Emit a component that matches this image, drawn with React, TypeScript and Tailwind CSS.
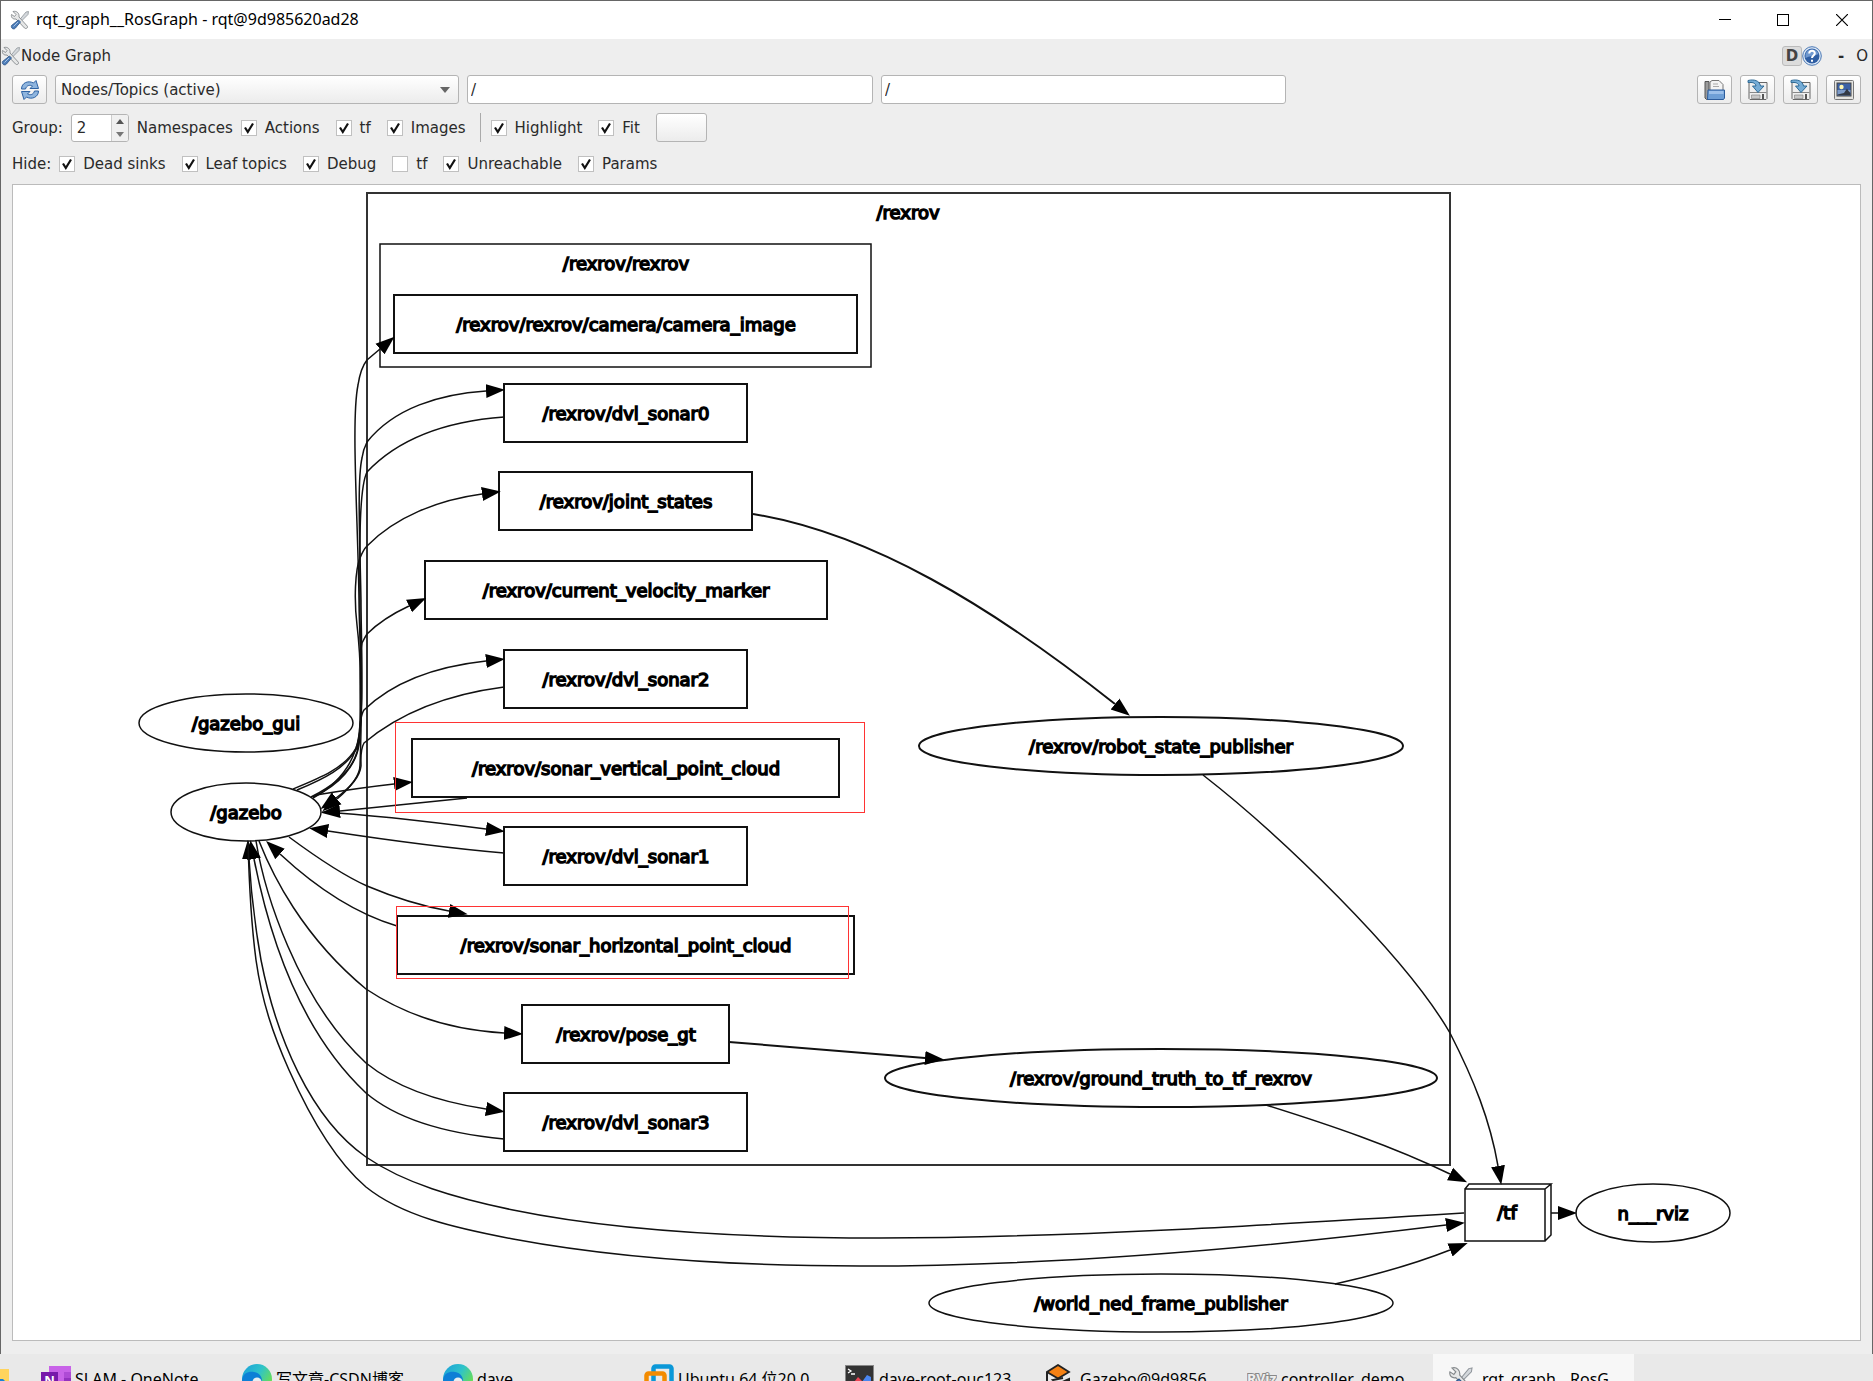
import { useState } from 'react'
import type { ReactNode } from 'react'

type Box = { label: string; x: number; y: number; w: number }
type Ellipse = { label: string; cx: number; cy: number; rx: number; bold?: boolean }
type Edge = { d: string; bold?: boolean }

const TOPICS: Box[] = [
  { label: '/rexrov/rexrov/camera/camera_image', x: 394, y: 295, w: 463 },
  { label: '/rexrov/dvl_sonar0', x: 504, y: 384, w: 243 },
  { label: '/rexrov/joint_states', x: 499, y: 472, w: 253 },
  { label: '/rexrov/current_velocity_marker', x: 425, y: 561, w: 402 },
  { label: '/rexrov/dvl_sonar2', x: 504, y: 650, w: 243 },
  { label: '/rexrov/sonar_vertical_point_cloud', x: 412, y: 739, w: 427 },
  { label: '/rexrov/dvl_sonar1', x: 504, y: 827, w: 243 },
  { label: '/rexrov/sonar_horizontal_point_cloud', x: 397, y: 916, w: 457 },
  { label: '/rexrov/pose_gt', x: 522, y: 1005, w: 207 },
  { label: '/rexrov/dvl_sonar3', x: 504, y: 1093, w: 243 },
]

const NODES: Ellipse[] = [
  { label: '/gazebo_gui', cx: 246, cy: 723, rx: 107 },
  { label: '/gazebo', cx: 246, cy: 812, rx: 75 },
  { label: '/rexrov/robot_state_publisher', cx: 1161, cy: 746, rx: 242, bold: true },
  { label: '/rexrov/ground_truth_to_tf_rexrov', cx: 1161, cy: 1078, rx: 276, bold: true },
  { label: '/world_ned_frame_publisher', cx: 1161, cy: 1303, rx: 232 },
  { label: 'n___rviz', cx: 1653, cy: 1213, rx: 77 },
]

const EDGES: Edge[] = [
  // gazebo -> topics
  { d: 'M293 789 C320 778 345 768 356 748 C366 726 359 640 359 600 C358 520 351 420 358 385 C360 372 363 365 367 360 L380 349' },
  { d: 'M297 790 C324 779 346 768 357 748 C365 720 361 640 361 600 C360 545 357 480 362 458 C363 450 365 446 367 442 C394 408 440 394 486 391' },
  { d: 'M311 797 C335 785 352 770 357 752 C364 720 360 650 357 625 C354 600 355 570 360 558 C362 553 364 549 367 546 C395 517 438 500 482 494' },
  { d: 'M313 797 C340 785 356 765 359 745 C362 720 358 660 362 643 C364 639 365 637 367 634 C380 621 394 613 409 606' },
  { d: 'M313 798 C340 783 355 762 359 735 C360 722 361 714 364 710 C395 680 440 666 486 661' },
  { d: 'M316 795 C340 791 367 787 394 784' },
  { d: 'M322 812 C376 815 432 822 486 829' },
  { d: 'M289 837 C312 854 340 874 367 886 C393 897 421 906 449 911' },
  { d: 'M259 841 C272 874 302 936 366 989 C405 1015 452 1030 504 1033' },
  { d: 'M256 841 C264 890 296 998 366 1063 C398 1089 440 1102 486 1109' },
  // topics -> gazebo
  { d: 'M504 417 C450 421 400 437 367 472 C358 490 360 560 360 620 C362 680 361 740 360 765 C360 776 350 788 337 799' },
  { d: 'M504 687 C450 694 402 711 364 743 C360 750 361 758 361 766 C360 776 350 788 336 798' },
  { d: 'M467 798 C425 802 382 807 340 811' },
  { d: 'M504 853 C446 848 387 840 328 831' },
  { d: 'M397 926 C360 915 322 893 280 854' },
  { d: 'M504 1139 C452 1134 400 1122 366 1093 C300 1031 270 940 254 859' },
  // tf
  { d: 'M1464 1213 C1270 1225 1060 1238 880 1238 C760 1238 620 1232 513 1210 C455 1198 404 1183 366 1157 C310 1118 276 1036 261 960 C255 926 251 892 249 859' },
  { d: 'M248 841 C249 881 251 922 256 960 C262 1002 273 1034 289 1070 C305 1106 332 1158 366 1187 C402 1216 455 1228 513 1239 C620 1259 740 1266 860 1266 C1060 1266 1260 1248 1446 1225' },
  { d: 'M753 514 C870 533 990 605 1115 704', bold: true },
  { d: 'M729 1042 L925 1058', bold: true },
  { d: 'M1203 775 C1280 835 1405 955 1450 1033 C1474 1080 1490 1120 1498 1166' },
  { d: 'M1266 1105 C1330 1125 1392 1146 1450 1174' },
  { d: 'M1335 1284 C1375 1275 1412 1265 1450 1250' },
  { d: 'M1551 1213 L1558 1213' },
]

function Label({ x, y, children }: { x: number; y: number; children: ReactNode }) {
  return (
    <text x={x} y={y} textAnchor="middle" fontSize="18" fill="#000" stroke="#000" strokeWidth="1.5">
      {children}
    </text>
  )
}

function RosGraph() {
  return (
    <svg
      viewBox="13 185 1847 1155"
      className="absolute inset-0 h-full w-full font-['DejaVu_Sans',sans-serif]"
      fill="none"
      stroke="#111"
    >
      <defs>
        <marker id="arrow" viewBox="0 0 19 16" refX="0" refY="8" markerWidth="19" markerHeight="16" markerUnits="userSpaceOnUse" orient="auto">
          <path d="M0 1L19 8L0 15Z" fill="#000" stroke="none" />
        </marker>
      </defs>

      {/* clusters */}
      <rect x="367" y="193" width="1083" height="972" stroke="#333" strokeWidth="2" />
      <Label x={908} y={219}>/rexrov</Label>
      <rect x="380" y="244" width="491" height="123" strokeWidth="1.5" />
      <Label x={626} y={270}>/rexrov/rexrov</Label>

      {TOPICS.map((t) => (
        <g key={t.label}>
          <rect x={t.x} y={t.y} width={t.w} height="58" strokeWidth="2" />
          <Label x={626} y={t.y + 36}>{t.label}</Label>
        </g>
      ))}

      {NODES.map((n) => (
        <g key={n.label}>
          <ellipse cx={n.cx} cy={n.cy} rx={n.rx} ry="29" strokeWidth={n.bold ? 2 : 1.5} />
          <Label x={n.cx} y={n.cy + 7}>{n.label}</Label>
        </g>
      ))}

      {/* tf topic drawn as a 3d box */}
      <path d="M1465 1189H1545V1241H1465ZM1465 1189L1469 1184H1551L1545 1189M1551 1184V1235L1545 1241" strokeWidth="1.5" />
      <Label x={1507} y={1219}>/tf</Label>

      {EDGES.map((e) => (
        <path key={e.d} d={e.d} strokeWidth={e.bold ? 2 : 1.5} markerEnd="url(#arrow)" />
      ))}

      {/* annotations */}
      <g stroke="#ff3333" strokeWidth="1" shapeRendering="crispEdges">
        <rect x="395.5" y="722.5" width="469" height="90" />
        <rect x="396.5" y="906.5" width="452" height="72" />
      </g>
    </svg>
  )
}

function ToolsIcon({ className }: { className: string }) {
  return (
    <svg viewBox="0 0 20 20" className={className}>
      <path d="M18.5 1.5L16 2L9 10.500L10.500 12L18 4.500Z" fill="#d4d8dc" stroke="#8f959b" strokeWidth=".8" />
      <path d="M3 1.500L6 4.500L4.500 6.500L1.500 4.500C.8 7.500 3 9.500 6 9L14.500 18C16 19.500 18.500 17.500 17.200 16L9 7C9.500 3.500 7 .5 3 1.500Z" fill="#e6e7e7" stroke="#85898c" strokeWidth=".9" />
      <path d="M8.500 10L10.500 12L5.500 18C4 20 .5 18.500 1.500 15.500Z" fill="#4d7db8" stroke="#2c5488" strokeWidth=".8" />
      <path d="M8 12L3.500 16.500" stroke="#a6c4e8" strokeWidth="1" />
    </svg>
  )
}

function RefreshIcon() {
  return (
    <svg viewBox="0 0 20 20" className="h-5 w-5">
      <path d="M1.500 9C1.500 3 8 0 13.500 3L16 .5L18.500 8.500H10L12.500 6C9.500 4.500 6.500 5.500 5.500 9Z" fill="#8fb5de" stroke="#2f63a4" strokeLinejoin="round" />
      <path d="M18.500 11C18.500 17 12 20 6.500 17L4 19.500L1.500 11.500H10L7.500 14C10.500 15.500 13.500 14.500 14.500 11Z" fill="#8fb5de" stroke="#2f63a4" strokeLinejoin="round" />
    </svg>
  )
}

function OpenIcon() {
  return (
    <svg viewBox="0 0 22 22" className="h-[22px] w-[22px]">
      <path d="M1 2.500H5V20.500H2.500L1 19Z" fill="#9a9a9a" stroke="#555" />
      <path d="M6 12V3L8 1.500H15L19 5.500V12Z" fill="#f4f4f4" stroke="#777" />
      <path d="M9 5H14M9 7.500H15" stroke="#aaa" />
      <path d="M4 11H20.500V19L19.500 20.500H3.500Z" fill="#6e9fd6" stroke="#2c5c9c" />
      <path d="M5 12H19.500V15H5Z" fill="#9cc0ea" />
    </svg>
  )
}

function SaveIcon() {
  return (
    <svg viewBox="0 0 22 22" className="h-[22px] w-[22px]">
      <path d="M2 3.500H20V19.500L19 20.500H3L2 19.500Z" fill="#efefef" stroke="#666" />
      <path d="M2.500 13.500H19.500" stroke="#888" />
      <path d="M4.500 16H13V19.500H4.500Z" fill="#c8c8c8" stroke="#888" strokeWidth=".7" />
      <path d="M16 15V20" stroke="#222" strokeWidth="1.500" />
      <path d="M1 1.500C7 0 12.500 1.500 13.500 7H17L11 13.500L5.500 7H9C8.500 4 5.500 3 1 3.500Z" fill="#75acd6" stroke="#21618f" strokeWidth=".9" strokeLinejoin="round" />
    </svg>
  )
}

function ImageIcon() {
  return (
    <svg viewBox="0 0 22 22" className="h-[22px] w-[22px]">
      <rect x="1.500" y="1.500" width="19" height="19" rx="1" fill="#e4e4e1" stroke="#777" />
      <rect x="4" y="4" width="14" height="13" fill="#3d62a5" stroke="#444" />
      <path d="M4.500 11H17.500V16.500H4.500Z" fill="#7d9bc8" />
      <circle cx="8.500" cy="8" r="2.200" fill="#fff7b0" />
      <path d="M4.500 16.500V15.500L11 14L14 9.500L15.500 12L17.500 14V16.500Z" fill="#333a45" />
    </svg>
  )
}

function HelpIcon() {
  return (
    <svg viewBox="0 0 20 20" className="h-5 w-5">
      <circle cx="10" cy="10" r="9.300" fill="#dce8f6" stroke="#4a78b5" />
      <circle cx="10" cy="10" r="7.500" fill="#2f5ea3" />
      <path d="M3.500 8A7 7 0 0 1 16.500 8C13 10 7 10 3.500 12Z" fill="#6f98cf" />
      <path d="M7.200 7.500C7.500 3.700 12.900 4.100 12.800 7.400C12.700 9.500 10 9.500 10 12M10 13.800V15.800" fill="none" stroke="#fff" strokeWidth="2" />
    </svg>
  )
}

const BTN = 'flex items-center justify-center rounded-[3px] border border-[#b4b4b4] bg-linear-to-b from-white to-[#ececec]'

function ToolButton({ label, children }: { label: string; children?: ReactNode }) {
  return (
    <button aria-label={label} className={`${BTN} h-[29px] w-[35px] shrink-0`}>
      {children}
    </button>
  )
}

function Check({ label, on = true }: { label: string; on?: boolean }) {
  const [checked, setChecked] = useState(on)
  return (
    <label className="flex items-center gap-2">
      <span className="grid h-4 w-4">
        <input
          type="checkbox"
          checked={checked}
          onChange={() => setChecked(!checked)}
          className="col-start-1 row-start-1 h-4 w-4 appearance-none border border-[#c0c0c0] bg-white"
        />
        {checked && (
          <svg viewBox="0 0 16 16" className="pointer-events-none col-start-1 row-start-1 h-4 w-4">
            <path d="M4 7.500L6.800 12L12 3.500" fill="none" stroke="#111" strokeWidth="2.200" />
          </svg>
        )}
      </span>
      {label}
    </label>
  )
}

function EdgeIcon() {
  return (
    <svg viewBox="0 0 30 30" className="h-[30px] w-[30px]">
      <defs>
        <linearGradient id="edge" x1="0" y1="0" x2="1" y2=".6">
          <stop offset="0" stopColor="#1a9fdc" />
          <stop offset=".55" stopColor="#2fc3c9" />
          <stop offset="1" stopColor="#6ee04c" />
        </linearGradient>
      </defs>
      <circle cx="15" cy="15" r="15" fill="url(#edge)" />
      <path d="M0 16C1 8 8 7 12 8C18 9 20 13 20 17L14 22L15 30C6 30 0 24 0 16Z" fill="#0d7fd6" />
      <circle cx="15" cy="18" r="4.500" fill="#e8eef0" />
    </svg>
  )
}

const TASKS: { name: string; active?: boolean; icon: ReactNode }[] = [
  {
    name: 'SLAM - OneNote',
    icon: (
      <svg viewBox="0 0 30 30" className="h-[30px] w-[30px]">
        <path d="M8 2H30V28H8Z" fill="#c863e8" />
        <path d="M23 8H30V14H23Z" fill="#ae4bd5" />
        <path d="M23 14H30V21H23Z" fill="#9332bf" />
        <path d="M0 8H17V25H0Z" fill="#7719aa" />
        <text x="8.500" y="21" textAnchor="middle" fontSize="13" fontWeight="700" fill="#fff">N</text>
      </svg>
    ),
  },
  { name: '写文章-CSDN博客', icon: <EdgeIcon /> },
  { name: 'dave', icon: <EdgeIcon /> },
  {
    name: 'Ubuntu 64 位20.0',
    icon: (
      <svg viewBox="0 0 30 30" className="h-[30px] w-[30px]" fill="none" strokeWidth="4.500">
        <rect x="9.500" y="2.500" width="18" height="18" rx="2" stroke="#0b98d8" />
        <rect x="2.500" y="9.500" width="18" height="18" rx="2" stroke="#f38b00" />
      </svg>
    ),
  },
  {
    name: 'dave-root-ouc123',
    icon: (
      <svg viewBox="0 0 30 30" className="h-[30px] w-[30px]">
        <rect x=".5" y="1.500" width="28" height="28" fill="#333" stroke="#888" />
        <path d="M3 5L6 7L3 9M6 10H10" fill="none" stroke="#fff" strokeWidth="1.300" />
        <path d="M6 22L13 13L17 17L10 26Z" fill="#ee4455" />
        <path d="M14 22L22 11L26 13V20L18 27Z" fill="#4a86f0" />
      </svg>
    ),
  },
  {
    name: 'Gazebo@9d9856',
    icon: (
      <svg viewBox="0 0 30 30" className="h-[30px] w-[30px]">
        <path d="M12 1L23 8L12 14.500L1 8Z" fill="#f58113" stroke="#222" strokeWidth="1.800" />
        <path d="M1 8V23L12 29L23 23V15L12 20L7 16L17 14" fill="none" stroke="#222" strokeWidth="2" />
      </svg>
    ),
  },
  {
    name: 'controller_demo',
    icon: (
      <svg viewBox="0 0 30 30" className="h-[30px] w-[30px]">
        <text x="0" y="20" fontSize="14" fontWeight="700" fill="#eee" stroke="#888" strokeWidth="2" paintOrder="stroke">RViz</text>
      </svg>
    ),
  },
  { name: 'rqt_graph__RosG', active: true, icon: <ToolsIcon className="h-[26px] w-[26px]" /> },
]

export default function App() {
  const [mode, setMode] = useState('Nodes/Topics (active)')
  const [depth, setDepth] = useState(2)

  return (
    <div className="flex h-screen flex-col overflow-hidden bg-[#e9e9e9] font-['DejaVu_Sans','Noto_Sans_CJK_SC',sans-serif] text-[15px] leading-5 text-[#2a2a2a]">
      <div className="flex min-h-0 flex-1 flex-col border-x border-t border-[#666] bg-[#eeeeee]">
        {/* title bar */}
        <header className="flex h-[38px] shrink-0 items-center bg-white pl-[9px] font-['Noto_Sans',sans-serif] text-black">
          <ToolsIcon className="mr-[6px] h-5 w-5" />
          <h1 className="flex-1 pb-[2px] text-[16px]">rqt_graph__RosGraph - rqt@9d985620ad28</h1>
          <div className="flex h-full">
            <button aria-label="Minimize" className="flex w-[58px] items-center justify-center">
              <svg viewBox="0 0 12 12" className="h-3 w-3"><path d="M0 5.500H12" stroke="#000" /></svg>
            </button>
            <button aria-label="Maximize" className="flex w-[58px] items-center justify-center">
              <svg viewBox="0 0 12 12" className="h-3 w-3"><rect x=".5" y=".5" width="11" height="11" fill="none" stroke="#000" /></svg>
            </button>
            <button aria-label="Close" className="flex w-[60px] items-center justify-center">
              <svg viewBox="0 0 12 12" className="h-3 w-3"><path d="M0 0L12 12M12 0L0 12" stroke="#000" strokeWidth="1.200" /></svg>
            </button>
          </div>
        </header>

        {/* dock title */}
        <div className="flex h-[34px] shrink-0 items-center">
          <ToolsIcon className="h-5 w-5" />
          <h2 className="flex-1">Node Graph</h2>
          <button className="h-5 w-5 rounded-[3px] border border-[#bbb] bg-[#dcdcdc] text-center leading-[18px] font-bold text-[#444]">D</button>
          <button aria-label="Help" className="mr-4"><HelpIcon /></button>
          <button aria-label="Hide dock" className="mr-3 font-bold">-</button>
          <button aria-label="Float dock" className="mr-1">O</button>
        </div>

        <div className="flex min-h-0 flex-1 flex-col px-[11px] pt-[2px] pb-[13px]">
          <div className="flex h-[29px] shrink-0 items-center gap-2">
            <ToolButton label="Refresh"><RefreshIcon /></ToolButton>
            <div className="grid w-[404px] items-center">
              <select
                aria-label="Graph type"
                value={mode}
                onChange={(e) => setMode(e.target.value)}
                className="col-start-1 row-start-1 h-[29px] appearance-none rounded-[3px] border border-[#b4b4b4] bg-linear-to-b from-white to-[#ececec] px-[5px]"
              >
                <option>Nodes only</option>
                <option>Nodes/Topics (active)</option>
                <option>Nodes/Topics (all)</option>
              </select>
              <svg viewBox="0 0 10 6" className="pointer-events-none col-start-1 row-start-1 mr-[9px] h-[6px] w-[10px] justify-self-end">
                <path d="M0 0H10L5 6Z" fill="#666" />
              </svg>
            </div>
            <input aria-label="Node filter" defaultValue="/" className="h-[29px] w-[406px] rounded-[3px] border border-[#b4b4b4] bg-white px-[3px]" />
            <input aria-label="Topic filter" defaultValue="/" className="h-[29px] w-[405px] rounded-[3px] border border-[#b4b4b4] bg-white px-[3px]" />
            <div className="flex-1" />
            <ToolButton label="Load DOT graph"><OpenIcon /></ToolButton>
            <ToolButton label="Save as DOT graph"><SaveIcon /></ToolButton>
            <ToolButton label="Save as SVG"><SaveIcon /></ToolButton>
            <ToolButton label="Save as image"><ImageIcon /></ToolButton>
          </div>

          <div className="mt-[9px] flex h-[29px] shrink-0 items-center gap-4">
            <div className="flex items-center gap-2">
              <label htmlFor="depth">Group:</label>
              <div className="flex h-7 w-[58px] overflow-hidden rounded-[3px] border border-[#b4b4b4] bg-white">
                <input
                  id="depth"
                  type="text"
                  inputMode="numeric"
                  value={depth}
                  onChange={(e) => setDepth(Number(e.target.value) || 0)}
                  className="w-10 min-w-0 flex-1 px-[5px]"
                />
                <div className="flex w-[17px] flex-col border-l border-[#ccc] bg-[#f0f0f0]">
                  <button aria-label="Increase" onClick={() => setDepth(depth + 1)} className="flex flex-1 items-center justify-center">
                    <svg viewBox="0 0 8 5" className="h-[5px] w-2"><path d="M0 5H8L4 0Z" fill="#555" /></svg>
                  </button>
                  <button aria-label="Decrease" onClick={() => setDepth(depth - 1)} className="flex flex-1 items-center justify-center">
                    <svg viewBox="0 0 8 5" className="h-[5px] w-2"><path d="M0 0H8L4 5Z" fill="#777" /></svg>
                  </button>
                </div>
              </div>
              <span>Namespaces</span>
              <Check label="Actions" />
            </div>
            <Check label="tf" />
            <div className="flex h-full items-center gap-[14px]">
              <Check label="Images" />
              <div className="flex h-full items-center gap-[10px]">
                <div className="h-full w-px bg-[#aaa]" />
                <Check label="Highlight" />
              </div>
            </div>
            <Check label="Fit" />
            <button aria-label="Fit in view" className={`${BTN} h-[29px] w-[51px]`} />
          </div>

          <div className="mt-3 flex h-5 shrink-0 items-center gap-4">
            <div className="flex items-center gap-2">
              <span>Hide:</span>
              <Check label="Dead sinks" />
            </div>
            <Check label="Leaf topics" />
            <Check label="Debug" />
            <Check label="tf" on={false} />
            <Check label="Unreachable" />
            <Check label="Params" />
          </div>

          <main className="relative mt-[10px] min-h-0 flex-1 border border-[#bbb] bg-white">
            <RosGraph />
          </main>
        </div>
      </div>

      {/* taskbar, only its upper part is on screen */}
      <nav className="flex h-[27px] shrink-0 overflow-hidden font-['Noto_Sans','Noto_Sans_CJK_SC',sans-serif] text-[16px] text-black">
        <button aria-label="Explorer" className="flex h-[50px] w-[26px] shrink-0 items-center">
          <svg viewBox="0 0 9 22" className="h-[22px] w-[9px]">
            <path d="M0 1H9V22H0Z" fill="#ffd45e" />
            <path d="M0 11H3L5 13V22H0Z" fill="#1883d7" />
          </svg>
        </button>
        {TASKS.map((t) => (
          <button
            key={t.name}
            className={`flex h-[50px] w-[201px] shrink-0 items-center gap-1 pl-[15px] whitespace-nowrap ${t.active ? 'bg-[#f7f7f7]' : ''}`}
          >
            <span className="flex w-[30px] shrink-0">{t.icon}</span>
            {t.name}
          </button>
        ))}
      </nav>
    </div>
  )
}
